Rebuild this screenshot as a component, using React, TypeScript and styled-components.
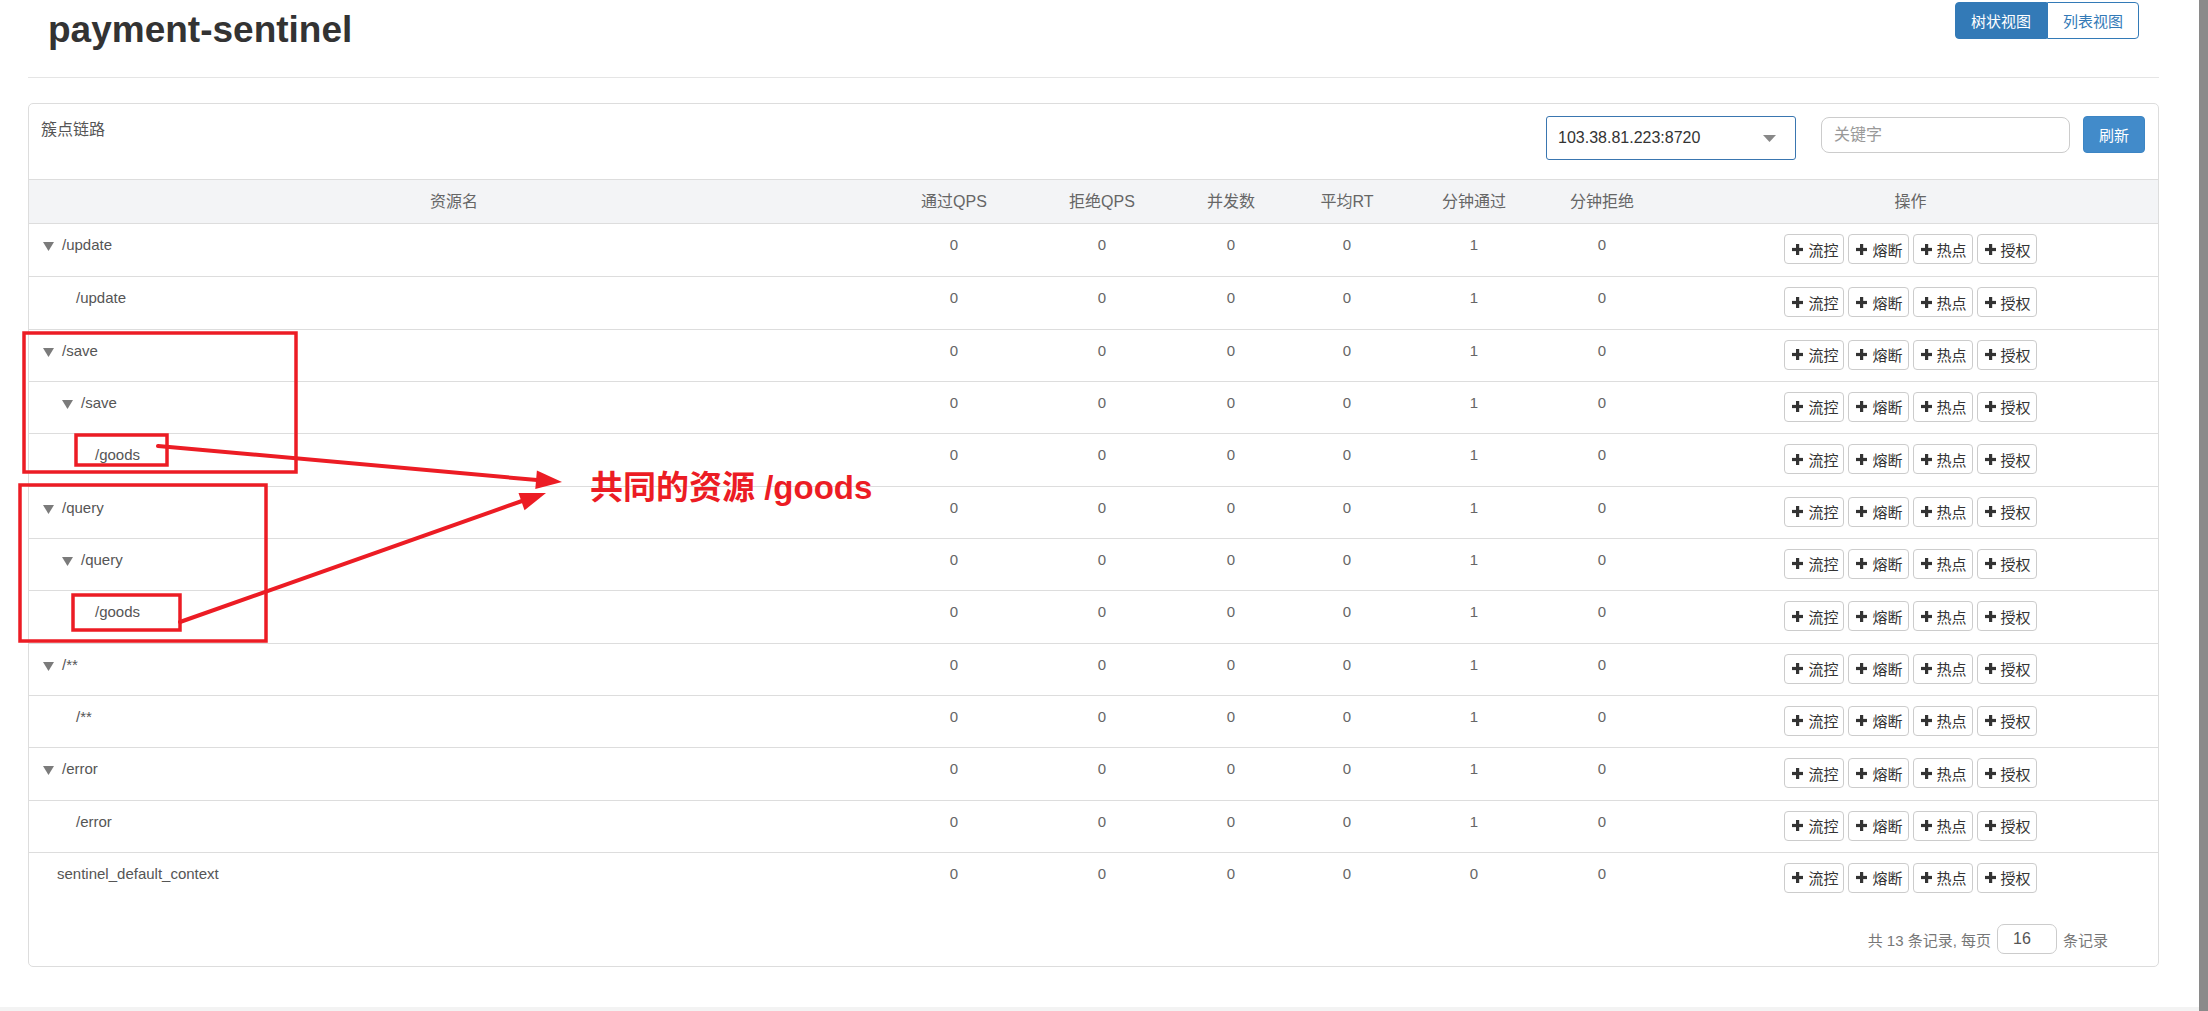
import React from 'react';
import styled, { createGlobalStyle } from 'styled-components';

const GlobalStyle = createGlobalStyle`
  html, body { margin: 0; padding: 0; background: #fff; }
  body { font-family: "Liberation Sans", "Noto Sans CJK SC", sans-serif; color: #333; }
  *, *::before, *::after { box-sizing: border-box; }
`;

const FONT = `"Liberation Sans", "Noto Sans CJK SC", sans-serif`;

const Viewport = styled.div`
  position: relative;
  display: flex;
  width: 2208px;
  height: 1011px;
  overflow: hidden;
`;

const Main = styled.div`
  flex: 1;
  min-width: 0;
  display: flex;
  flex-direction: column;
`;

const ScrollStrip = styled.div`
  width: 9px;
  flex-shrink: 0;
  background: #8a8a8a;
`;

const Container = styled.div`
  margin: 0 40px 0 28px;
`;

const Spacer = styled.div`
  flex: 1;
`;

const FooterBar = styled.div`
  height: 4px;
  background: #f3f3f3;
`;

const PageHeader = styled.header`
  height: 78px;
  display: flex;
  justify-content: space-between;
  align-items: flex-start;
  padding: 0 20px;
  border-bottom: 1px solid #e5e5e5;
`;

const Title = styled.h1`
  margin: 9px 0 0;
  font-size: 37px;
  line-height: 41px;
  font-weight: bold;
  color: #333;
`;

const ToggleGroup = styled.div`
  display: flex;
  margin-top: 2px;
`;

const ToggleButton = styled.button<{ $active?: boolean }>`
  height: 37px;
  padding: 0 15px;
  font-family: ${FONT};
  font-size: 15px;
  border: 1px solid #337ab7;
  background: ${p => (p.$active ? '#337ab7' : '#fff')};
  color: ${p => (p.$active ? '#fff' : '#337ab7')};
  border-radius: ${p => (p.$active ? '4px 0 0 4px' : '0 4px 4px 0')};
  cursor: pointer;
`;

const Panel = styled.section`
  margin-top: 25px;
  border: 1px solid #ddd;
  border-radius: 5px;
  background: #fff;
`;

const PanelHeading = styled.div`
  height: 75px;
  display: flex;
  align-items: flex-start;
  padding: 12px 13px 0 12px;
`;

const PanelTitle = styled.div`
  margin-top: 3px;
  font-size: 16px;
  line-height: 22px;
  color: #555;
`;

const Controls = styled.div`
  margin-left: auto;
  display: flex;
  align-items: flex-start;
`;

const SelectBox = styled.div`
  width: 250px;
  height: 44px;
  display: flex;
  align-items: center;
  justify-content: space-between;
  padding: 0 19px 0 11px;
  border: 1px solid #3a76b0;
  border-radius: 3px;
  font-size: 16px;
  color: #333;
`;

const KeywordInput = styled.input`
  margin: 1px 0 0 25px;
  width: 249px;
  height: 36px;
  padding: 0 12px;
  border: 1px solid #ccc;
  border-radius: 8px;
  font-family: ${FONT};
  font-size: 16px;
  color: #555;
  outline: none;
  &::placeholder { color: #999; }
`;

const RefreshButton = styled.button`
  margin-left: 13px;
  width: 62px;
  height: 37px;
  border: 1px solid #3c85c4;
  border-radius: 4px;
  background: #428bca;
  color: #fff;
  font-family: ${FONT};
  font-size: 15px;
  cursor: pointer;
`;

const COLS = '850px 150px 146px 112px 120px 134px 122px 1fr';

const HeadRow = styled.div`
  display: grid;
  grid-template-columns: ${COLS};
  height: 45px;
  border-top: 1px solid #ddd;
  border-bottom: 1px solid #ddd;
  background: #f3f4f6;
`;

const HeadCell = styled.div`
  text-align: center;
  font-size: 16px;
  line-height: 43px;
  color: #666;
`;

const Row = styled.div`
  display: grid;
  grid-template-columns: ${COLS};
  height: 52.33px;
  & + & { border-top: 1px solid #ddd; }
`;

const NameCell = styled.div<{ $indent: number }>`
  display: flex;
  align-items: flex-start;
  padding: 10px 0 0 ${p => p.$indent}px;
  font-size: 15px;
  line-height: 21px;
  color: #555;
`;

const Caret = styled.svg`
  flex-shrink: 0;
  margin: 8px 8px 0 0;
`;

const LeafGap = styled.span`
  display: inline-block;
  width: 14px;
  flex-shrink: 0;
`;

const NumCell = styled.div`
  padding-top: 10px;
  text-align: center;
  font-size: 15px;
  line-height: 21px;
  color: #666;
`;

const OpsCell = styled.div`
  display: flex;
  justify-content: center;
  align-items: flex-start;
  gap: 4px;
  padding-top: 10px;
`;

const OpButton = styled.button`
  height: 30px;
  display: inline-flex;
  align-items: center;
  gap: 5px;
  padding: 0 5px 0 7px;
  border: 1px solid #ccc;
  border-radius: 4px;
  background: #fff;
  color: #333;
  font-family: ${FONT};
  font-size: 15px;
  cursor: pointer;
`;

const Pagination = styled.div`
  display: flex;
  justify-content: flex-end;
  align-items: center;
  gap: 6px;
  padding: 20px 50px 12px 0;
  font-size: 15px;
  color: #777;
`;

const PageSizeInput = styled.input`
  width: 60px;
  height: 30px;
  padding: 0 0 0 15px;
  border: 1px solid #ccc;
  border-radius: 7px;
  font-family: ${FONT};
  font-size: 16px;
  color: #555;
  outline: none;
`;

const Overlay = styled.svg`
  position: absolute;
  left: 0;
  top: 0;
  pointer-events: none;
`;

const AnnotationLabel = styled.div`
  position: absolute;
  left: 590px;
  top: 471px;
  font-family: "Liberation Sans", "Noto Sans CJK SC", sans-serif;
  font-size: 33px;
  line-height: 33px;
  font-weight: bold;
  color: #ec1c24;
  white-space: nowrap;
  pointer-events: none;
`;

type Node = { name: string; level: number; tree: boolean; minutePass: number };

const rows: Node[] = [
  { name: '/update', level: 1, tree: true, minutePass: 1 },
  { name: '/update', level: 2, tree: false, minutePass: 1 },
  { name: '/save', level: 1, tree: true, minutePass: 1 },
  { name: '/save', level: 2, tree: true, minutePass: 1 },
  { name: '/goods', level: 3, tree: false, minutePass: 1 },
  { name: '/query', level: 1, tree: true, minutePass: 1 },
  { name: '/query', level: 2, tree: true, minutePass: 1 },
  { name: '/goods', level: 3, tree: false, minutePass: 1 },
  { name: '/**', level: 1, tree: true, minutePass: 1 },
  { name: '/**', level: 2, tree: false, minutePass: 1 },
  { name: '/error', level: 1, tree: true, minutePass: 1 },
  { name: '/error', level: 2, tree: false, minutePass: 1 },
  { name: 'sentinel_default_context', level: 1, tree: false, minutePass: 0 },
];

const headers = ['资源名', '通过QPS', '拒绝QPS', '并发数', '平均RT', '分钟通过', '分钟拒绝', '操作'];
const ops = ['流控', '熔断', '热点', '授权'];

const PlusIcon = () => (
  <svg width="11" height="11" viewBox="0 0 11 11">
    <rect x="4" y="0" width="3.2" height="11" fill="#333" />
    <rect x="0" y="3.9" width="11" height="3.2" fill="#333" />
  </svg>
);

const TreeCaret = () => (
  <Caret width="11" height="9" viewBox="0 0 11 9">
    <polygon points="0,0 11,0 5.5,9" fill="#7b7b7b" />
  </Caret>
);

const RED = '#ec1c24';

export default function App() {
  return (
    <Viewport>
      <GlobalStyle />
      <Main>
        <Container>
          <PageHeader>
            <Title>payment-sentinel</Title>
            <ToggleGroup>
              <ToggleButton $active>树状视图</ToggleButton>
              <ToggleButton>列表视图</ToggleButton>
            </ToggleGroup>
          </PageHeader>

          <Panel>
            <PanelHeading>
              <PanelTitle>簇点链路</PanelTitle>
              <Controls>
                <SelectBox>
                  <span>103.38.81.223:8720</span>
                  <svg width="13" height="7" viewBox="0 0 13 7">
                    <polygon points="0,0 13,0 6.5,7" fill="#888" />
                  </svg>
                </SelectBox>
                <KeywordInput placeholder="关键字" />
                <RefreshButton>刷新</RefreshButton>
              </Controls>
            </PanelHeading>

            <HeadRow>
              {headers.map(h => (
                <HeadCell key={h}>{h}</HeadCell>
              ))}
            </HeadRow>

            {rows.map((r, i) => (
              <Row key={i}>
                <NameCell $indent={14 + (r.level - 1) * 19}>
                  {r.tree ? <TreeCaret /> : <LeafGap />}
                  <span>{r.name}</span>
                </NameCell>
                <NumCell>0</NumCell>
                <NumCell>0</NumCell>
                <NumCell>0</NumCell>
                <NumCell>0</NumCell>
                <NumCell>{r.minutePass}</NumCell>
                <NumCell>0</NumCell>
                <OpsCell>
                  {ops.map(o => (
                    <OpButton key={o}>
                      <PlusIcon />
                      <span>{o}</span>
                    </OpButton>
                  ))}
                </OpsCell>
              </Row>
            ))}

            <Pagination>
              <span>共 13 条记录, 每页</span>
              <PageSizeInput defaultValue="16" />
              <span>条记录</span>
            </Pagination>
          </Panel>
        </Container>
        <Spacer />
        <FooterBar />
      </Main>
      <ScrollStrip />

      <Overlay width="2208" height="1011" viewBox="0 0 2208 1011">
        <g fill="none" stroke={RED} strokeWidth="3.5">
          <rect x="24" y="333" width="272" height="139" />
          <rect x="76" y="435" width="91" height="30" />
          <rect x="20" y="485" width="246" height="156" />
          <rect x="73" y="595" width="107" height="35" />
        </g>
        <g stroke={RED} strokeWidth="4" strokeLinecap="round">
          <line x1="158" y1="446" x2="537" y2="480" />
          <line x1="180" y1="622" x2="522" y2="501" />
        </g>
        <g fill={RED}>
          <polygon points="562,482 535.3,489 536.9,470.5" />
          <polygon points="546,493 524.5,510.3 518.5,493" />
        </g>
      </Overlay>
      <AnnotationLabel>共同的资源 /goods</AnnotationLabel>
    </Viewport>
  );
}
